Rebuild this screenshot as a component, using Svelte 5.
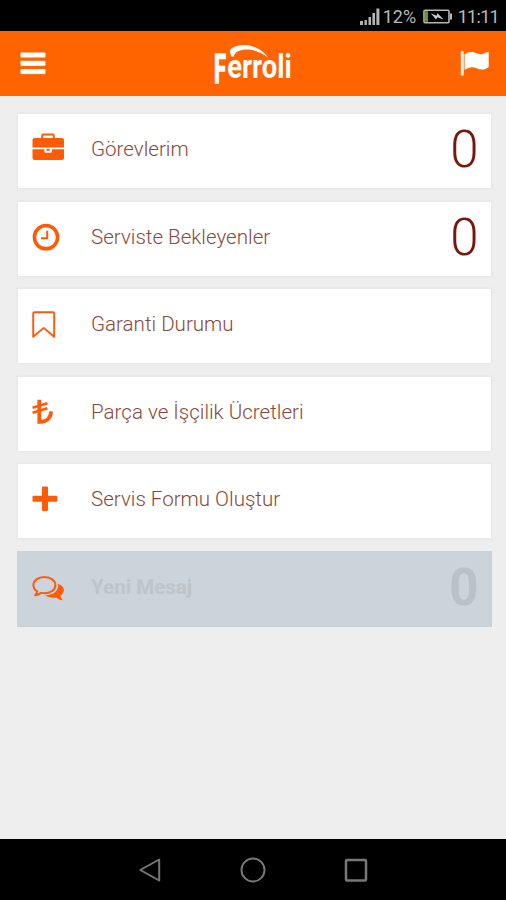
<script>
  const items = [
    { icon: 'briefcase', label: 'Görevlerim', count: 0 },
    { icon: 'clock', label: 'Serviste Bekleyenler', count: 0 },
    { icon: 'bookmark', label: 'Garanti Durumu' },
    { icon: 'lira', label: 'Parça ve İşçilik Ücretleri' },
    { icon: 'plus', label: 'Servis Formu Oluştur' },
    { icon: 'comments', label: 'Yeni Mesaj', count: 0, muted: true }
  ];
</script>

{#snippet glyph(name)}
  <svg class="glyph" width="34" height="34" viewBox="0 0 34 34" aria-hidden="true">
    {#if name === 'briefcase'}
      <path class="line" stroke-width="2" d="M11.2 8V5.6Q11.2 4.6 12.2 4.6H21.8Q22.8 4.6 22.8 5.6V8" />
      <path d="M3.5 8H31Q33 8 33 10V17.6H1.5V10Q1.5 8 3.5 8Z" />
      <path d="M1.5 19.2H13.3V21.2Q13.3 22.7 14.8 22.7H19.4Q20.9 22.7 20.9 21.2V19.2H33V28Q33 30 31 30H3.5Q1.5 30 1.5 28Z" />
      <path d="M15.4 18.8H18.8V20.8H15.4Z" />
    {:else if name === 'clock'}
      <circle class="line" cx="15" cy="19.2" r="11.6" stroke-width="3.5" />
      <path class="line" stroke-width="2" d="M16.2 12.8V20.2H10" />
    {:else if name === 'bookmark'}
      <path class="line" stroke-width="1.9" stroke-linejoin="round" d="M3.4 7.2H22Q23.2 7.2 23.2 8.4V31.8L12.7 22.9L2.2 31.8V8.4Q2.2 7.2 3.4 7.2Z" />
    {:else if name === 'lira'}
      <path class="line" stroke-width="3.8" d="M8.3 6.8V28.8C15.2 29 19.8 25.2 20.1 18.3" />
      <path class="line" stroke-width="2.5" d="M1.6 14.8L16.4 10.2M1.6 19.8L16.4 15.2" />
    {:else if name === 'plus'}
      <path d="M12 6.5H16Q17 6.5 17 7.5V15.8H25.4Q26.4 15.8 26.4 16.8V20.8Q26.4 21.8 25.4 21.8H17V30Q17 31 16 31H12Q11 31 11 30V21.8H2.5Q1.5 21.8 1.5 20.8V16.8Q1.5 15.8 2.5 15.8H11V7.5Q11 6.5 12 6.5Z" />
    {:else}
      <path d="M27.2 15.8C31.4 17.4 33.2 20.1 32.8 23C32.5 24.9 31.3 26.5 29.4 27.7C29.8 29.6 31 30.6 31.8 32.3C29.2 32.2 27 30.9 25.3 29.5C20.8 30.2 16.6 29.4 14.2 27.3C21.6 27.4 27.8 23.6 27.2 15.8Z" />
      <path class="line" stroke-width="2" stroke-linejoin="round" d="M13.4 9C19.6 9 24.4 12.5 24.4 17.2C24.4 21.8 19.6 25.3 13.4 25.3Q11.6 25.3 10 24.9Q7.6 26.8 4.2 27.3Q6 25.4 6.2 23.3Q2.4 21 2.4 17.2C2.4 12.5 7.2 9 13.4 9Z" />
    {/if}
  </svg>
{/snippet}

<div class="screen">
  <div class="status">
    <svg class="signal" width="20" height="17" viewBox="0 0 20 17">
      <path d="M0 13h3v4H0zM4.5 12h2.4v5H4.5zM8.5 9h2.5v8H8.5zM12.4 5H15v12h-2.6zM16.4 0.5H19.4V17h-3z" />
    </svg>
    <span class="percent">12%</span>
    <svg class="battery" width="29" height="15" viewBox="0 0 29 15">
      <rect x="1" y="1.2" width="25" height="12.6" rx="1" fill="none" stroke="#b5b5b5" stroke-width="1.6" />
      <path d="M27 4.5h2v6h-2z" fill="#b5b5b5" />
      <path d="M2 2.2h3v10.6H2z" fill="#5fa000" />
      <path d="M7.8 4.2L13.5 6.8L14.5 4.2L20.6 10.6L14.4 8.2L13 10.6Z" fill="#cfcfcf" />
    </svg>
    <span class="time">11:11</span>
  </div>

  <header>
    <svg class="menu" width="26" height="24" viewBox="0 0 26 24">
      <path d="M1 1h24v4H1zM1 9.3h24v4H1zM1 17.6h24v4H1z" fill="#fff" stroke="#fff" stroke-width="1" stroke-linejoin="round" />
    </svg>
    <svg class="logo" width="84" height="64" viewBox="0 0 84 64" role="img" aria-label="Ferroli">
      <text class="initial" x="1" y="50.5" font-size="40" textLength="12" lengthAdjust="spacingAndGlyphs">F</text>
      <text x="14.2" y="46" font-size="34" textLength="64.6" lengthAdjust="spacingAndGlyphs">erroli</text>
      <path d="M18.6 24.5C16.6 21 16.4 18.1 18.4 16.5C27 10.9 44 10.9 55.3 25.7C45 17.7 33 15.7 25.2 19.3C22.2 20.7 21.4 22.5 20.8 24.5Z" />
    </svg>
    <svg class="flag" width="30" height="26" viewBox="0 0 30 26">
      <path d="M0.8 0.6Q2.2 -0.8 3.8 0.6V24.4H0.8Z" fill="#fff" opacity="0.9" />
      <path d="M4.6 3.2C10 0 13.2 0.6 17.3 2.5C21 4.1 23.8 3 27.2 1.1Q28.7 0.4 28.7 1.9V15.2Q28.7 16.2 27.8 16.7C23.6 19.1 20.4 19.1 16.6 17.2C12.4 15.3 9.2 16 4.6 18.7Z" fill="#fff" />
    </svg>
  </header>

  <main>
    {#each items as item}
      <div class="card" class:muted={item.muted}>
        {@render glyph(item.icon)}
        <span class="label">{item.label}</span>
        {#if item.count !== undefined}
          <span class="count">{item.count}</span>
        {/if}
      </div>
    {/each}
  </main>

  <nav>
    <svg width="24" height="26" viewBox="0 0 24 26"><path d="M2.3 13L21.2 2.5V23.5Z" /></svg>
    <svg width="26" height="26" viewBox="0 0 26 26"><circle cx="13" cy="13" r="11.5" /></svg>
    <svg width="24" height="26" viewBox="0 0 24 26"><rect x="2" y="3" width="20" height="20.5" rx="1" stroke-width="2.5" /></svg>
  </nav>
</div>

<style>
  :global(body) {
    background: #eee;
  }

  .screen {
    display: flex;
    flex-direction: column;
    width: 506px;
    height: 900px;
    overflow: hidden;
    background: #eee;
    font-family: Roboto, sans-serif;
  }

  svg {
    display: block;
    flex: none;
  }

  .status {
    display: flex;
    align-items: center;
    justify-content: flex-end;
    box-sizing: border-box;
    height: 31px;
    padding: 2px 7px 0 0;
    background: #000;
    color: #b9b9b9;
    font-size: 18px;
    line-height: 29px;
  }
  .signal {
    fill: #b5b5b5;
    margin-right: 3px;
  }
  .percent {
    width: 36px;
    margin-right: 4px;
  }
  .battery {
    margin-right: 6px;
  }
  .time {
    letter-spacing: -0.7px;
  }

  header {
    display: flex;
    align-items: center;
    justify-content: space-between;
    box-sizing: border-box;
    height: 65px;
    padding: 0 16px 0 20px;
    background: #ff6400;
  }
  .logo {
    fill: #fff;
    font-weight: 700;
    margin-left: 3.5px;
    overflow: visible;
  }
  .initial {
    stroke: #fff;
    stroke-width: 1.3px;
  }

  main {
    display: flex;
    flex-direction: column;
    flex: 1;
    gap: 13.5px;
    padding: 18px 15.5px 0 17.5px;
  }

  .card {
    display: flex;
    align-items: flex-start;
    box-sizing: border-box;
    height: 74px;
    padding: 16px 12px 0 13.5px;
    background: #fff;
    box-shadow: 0 0 2px 1px #e6e6e6;
    color: #87493c;
  }
  .glyph {
    fill: #ff5a05;
  }
  .glyph .line {
    fill: none;
    stroke: #ff5a05;
  }
  .label {
    flex: 1;
    margin-left: 26px;
    font-size: 20.55px;
    font-weight: 300;
    line-height: 39.5px;
  }
  .count {
    font-size: 51px;
    font-weight: 300;
    line-height: 39px;
    color: #7a160c;
  }

  .muted {
    background: #cbd3db;
    box-shadow: 0 0 0 1px #c9d2d8;
    color: #bdc5c9;
  }
  .muted .label {
    font-weight: 700;
  }
  .muted .count {
    font-weight: 700;
    color: #b9c2c6;
  }

  nav {
    display: flex;
    align-items: center;
    justify-content: center;
    gap: 78px;
    height: 61px;
    background: #000;
  }
  nav svg {
    fill: none;
    stroke: #777;
    stroke-width: 2;
    stroke-linejoin: round;
  }
</style>
